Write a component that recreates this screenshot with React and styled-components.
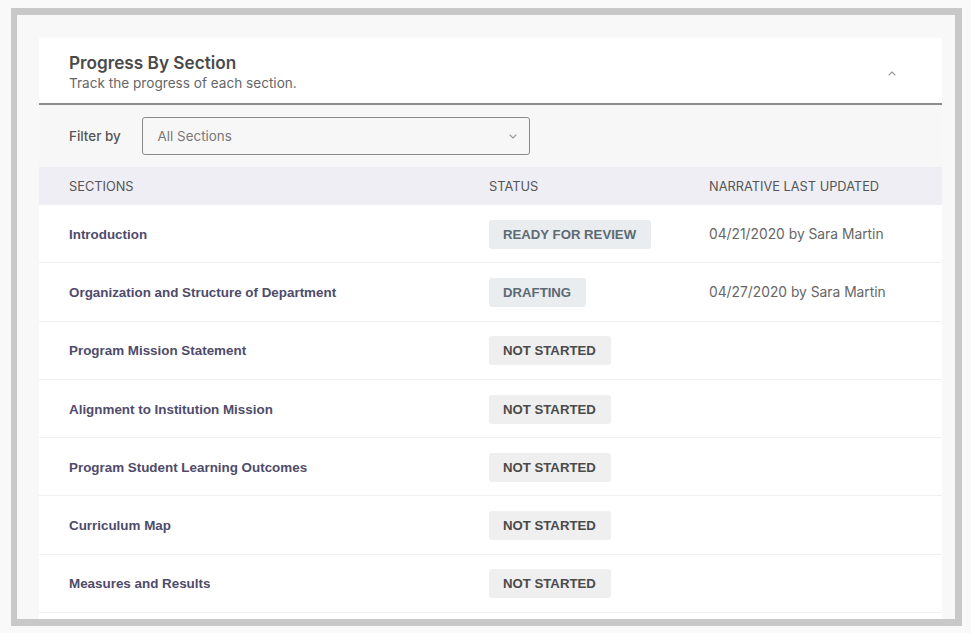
import styled, { createGlobalStyle } from "styled-components";

const GlobalStyle = createGlobalStyle`
  html, body {
    margin: 0;
    padding: 0;
    background: #f9f9f9;
  }
  body {
    font-family: Inter, "Noto Sans", sans-serif;
  }
`;

const sections = [
  { name: "Introduction", status: "ready", updated: "04/21/2020 by Sara Martin" },
  { name: "Organization and Structure of Department", status: "drafting", updated: "04/27/2020 by Sara Martin" },
  { name: "Program Mission Statement", status: "none" },
  { name: "Alignment to Institution Mission", status: "none" },
  { name: "Program Student Learning Outcomes", status: "none" },
  { name: "Curriculum Map", status: "none" },
  { name: "Measures and Results", status: "none" },
];

const statusLabel = {
  ready: "READY FOR REVIEW",
  drafting: "DRAFTING",
  none: "NOT STARTED",
};

const Page = styled.div`
  padding: 8px 9px 7px 11px;
`;

const Frame = styled.div`
  border: 7px solid #c8c8c8;
  border-left-width: 6px;
  background: #f8f8f8;
  height: 618px;
  box-sizing: border-box;
  padding: 23px 13px 0 22px;
  overflow: hidden;
`;

const Card = styled.section`
  background: #fff;
  padding-bottom: 20px;
`;

const Header = styled.div`
  display: flex;
  align-items: flex-start;
  justify-content: space-between;
  padding: 14px 46px 11px 30px;
  border-bottom: 2px solid #8c8c8c;
`;

const Title = styled.h2`
  margin: 0;
  font-size: 17.2px;
  line-height: 22px;
  font-weight: 600;
  color: #4a4a4a;
`;

const SubTitle = styled.p`
  margin: 1px 0 0;
  font-size: 13.6px;
  line-height: 17px;
  color: #666;
`;

const Toggle = styled.span`
  margin-top: 19px;
  color: #999;
  display: flex;
`;

const FilterRow = styled.div`
  display: flex;
  align-items: center;
  gap: 21px;
  padding: 12px 30px;
  background: #f7f7f7;
`;

const FilterLabel = styled.span`
  font-size: 13.4px;
  font-weight: 500;
  color: #555;
`;

const Select = styled.div`
  width: 388px;
  height: 38px;
  box-sizing: border-box;
  border: 1px solid #8a8a8a;
  border-radius: 3px;
  display: flex;
  align-items: center;
  justify-content: space-between;
  padding: 0 12px 0 15px;
  font-size: 13.4px;
  color: #777;
`;

const SelectIcon = styled.span`
  color: #999;
  display: flex;
`;

const Grid = styled.div`
  display: grid;
  grid-template-columns: 420px 220px 1fr;
  align-items: center;
  padding: 0 30px;
`;

const HeadRow = styled(Grid)`
  height: 38px;
  background: #eeeef4;
  font-size: 12.8px;
  color: #555;
  text-transform: uppercase;
`;

const Row = styled(Grid)`
  box-sizing: border-box;
  height: 58.3px;
  padding-top: 1px;
  border-bottom: 1px solid #f0f0f0;
`;

const SectionName = styled.span`
  font-family: "Liberation Sans", Arial, sans-serif;
  font-weight: 700;
  font-size: 13.4px;
  color: #4f4b6b;
`;

const Badge = styled.span`
  justify-self: start;
  font-family: "Liberation Sans", Arial, sans-serif;
  font-weight: 700;
  font-size: 13.2px;
  line-height: 29px;
  padding: 0 15px 0 14px;
  border-radius: 3px;
  background: ${(p) => (p.$status === "none" ? "#efefef" : "#e9edf0")};
  color: ${(p) => (p.$status === "none" ? "#4a4a4a" : "#5d6a73")};
`;

const Updated = styled.span`
  font-size: 13.8px;
  color: #666;
`;

const Chevron = ({ up }) => (
  <svg width="8" height="5" viewBox="0 0 8 5" fill="none">
    <path
      d={up ? "M1 4L4 1L7 4" : "M1 1L4 4L7 1"}
      stroke="currentColor"
      strokeWidth="1.1"
      strokeLinecap="round"
      strokeLinejoin="round"
    />
  </svg>
);

const App = () => {
  return (
    <Page>
      <GlobalStyle />
      <Frame>
        <Card>
          <Header>
            <div>
              <Title>Progress By Section</Title>
              <SubTitle>Track the progress of each section.</SubTitle>
            </div>
            <Toggle>
              <Chevron up />
            </Toggle>
          </Header>
          <FilterRow>
            <FilterLabel>Filter by</FilterLabel>
            <Select>
              All Sections
              <SelectIcon>
                <Chevron />
              </SelectIcon>
            </Select>
          </FilterRow>
          <HeadRow>
            <span>Sections</span>
            <span>Status</span>
            <span>Narrative Last Updated</span>
          </HeadRow>
          {sections.map((s) => (
            <Row key={s.name}>
              <SectionName>{s.name}</SectionName>
              <Badge $status={s.status}>{statusLabel[s.status]}</Badge>
              <Updated>{s.updated}</Updated>
            </Row>
          ))}
        </Card>
      </Frame>
    </Page>
  );
};

export default App;
